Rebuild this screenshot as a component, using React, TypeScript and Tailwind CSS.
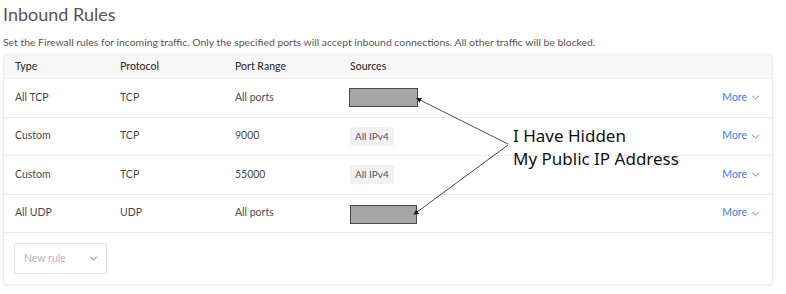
import React from 'react';

const ChevronDown: React.FC<{ className?: string }> = ({ className }) => (
  <svg viewBox="0 0 10 6" className={className} fill="none" stroke="currentColor" strokeWidth="1.1">
    <path d="M1 1l4 4 4-4" />
  </svg>
);

const rows = [
  { type: 'All TCP', protocol: 'TCP', range: 'All ports', source: 'hidden' },
  { type: 'Custom', protocol: 'TCP', range: '9000', source: 'All IPv4' },
  { type: 'Custom', protocol: 'TCP', range: '55000', source: 'All IPv4' },
  { type: 'All UDP', protocol: 'UDP', range: 'All ports', source: 'hidden' },
];

const App: React.FC = () => {
  return (
    <div className="relative w-[786px] h-[294px] bg-white font-['Lato',sans-serif] text-[#4a4a4a]">
      <div className="px-[3px] pt-[2px]">
        <h1 className="text-[18px] leading-[24px] font-normal text-[#555]">Inbound Rules</h1>
        <p className="mt-[9px] text-[10.4px] leading-[14px] text-[#555]">
          Set the Firewall rules for incoming traffic. Only the specified ports will accept inbound connections. All other traffic will be blocked.
        </p>
        <div className="mt-[5px] w-[770px] border border-[#ebebeb] rounded-[3px] shadow-[0_1px_1px_rgba(0,0,0,0.04)]">
          <div className="grid grid-cols-[105px_115px_115px_1fr] items-center h-[24px] pl-[11px] bg-[#f7f7f7] text-[10.5px] text-[#333] font-medium border-b border-[#ececec]">
            <span>Type</span>
            <span>Protocol</span>
            <span>Port Range</span>
            <span>Sources</span>
          </div>
          {rows.map((r, i) => (
            <div key={i} className="grid grid-cols-[105px_115px_115px_1fr_auto] items-center h-[38.5px] pl-[11px] pr-[12px] text-[10.5px] border-b border-[#ececec]">
              <span>{r.type}</span>
              <span>{r.protocol}</span>
              <span>{r.range}</span>
              <span>
                {r.source === 'hidden' ? (
                  <span className={`block h-[19px] bg-[#a5a5a7] border border-[#4a4a4a] ${i === 0 ? 'w-[69px] -ml-[1px]' : 'w-[67px] mt-[2px]'}`} />
                ) : (
                  <span className="inline-block px-[5px] py-[2px] rounded-[3px] bg-[#f1f1f1] text-[10px] text-[#555]">{r.source}</span>
                )}
              </span>
              <span className="flex items-center gap-[4px] text-[#3a7ee8] text-[10.5px]">
                More
                <ChevronDown className="w-[9px] h-[5px]" />
              </span>
            </div>
          ))}
          <div className="h-[51px] pl-[10px] pt-[10px]">
            <div className="flex items-center justify-between w-[93px] h-[31px] border border-[#e6e6e6] rounded-[2px] pl-[9px] pr-[8px] text-[10.5px] text-[#b5b5b5]">
              New rule
              <ChevronDown className="w-[9px] h-[5px] text-[#666]" />
            </div>
          </div>
        </div>
      </div>

      <svg className="absolute left-0 top-0 pointer-events-none" width="786" height="294">
        <defs>
          <marker id="ah" markerWidth="6" markerHeight="6" refX="1" refY="3" orient="auto-start-reverse">
            <path d="M0 0L6 3L0 6z" fill="#222" />
          </marker>
        </defs>
        <line x1="508" y1="144" x2="420" y2="100" stroke="#333" strokeWidth="0.9" markerEnd="url(#ah)" />
        <line x1="508" y1="145" x2="417" y2="212" stroke="#333" strokeWidth="0.9" markerEnd="url(#ah)" />
      </svg>
      <div className="absolute left-[513px] top-[124px] font-['Noto_Sans',sans-serif] text-[17px] leading-[23px] text-[#111]">
        <div>I Have Hidden</div>
        <div>My Public IP Address</div>
      </div>
    </div>
  );
};

export default App;
